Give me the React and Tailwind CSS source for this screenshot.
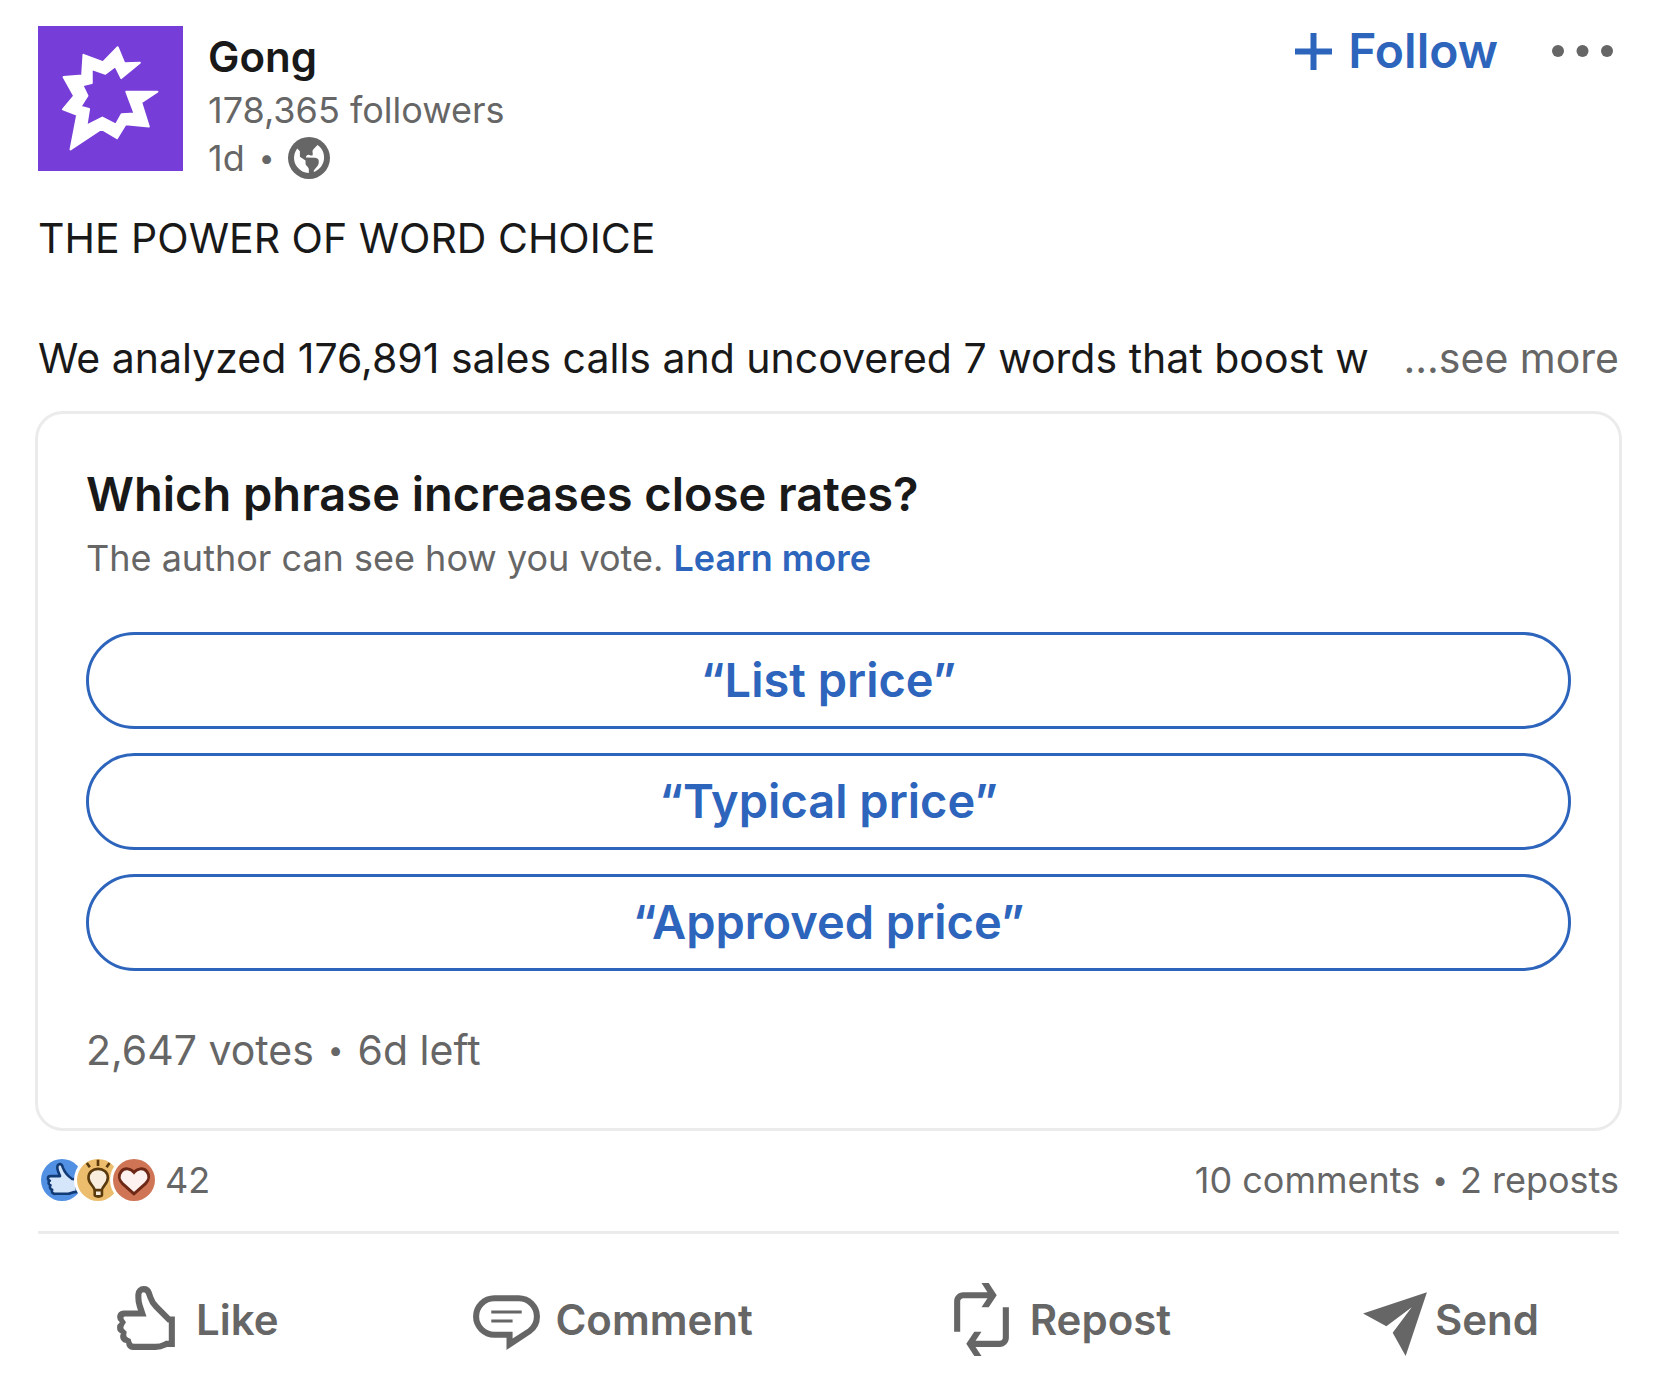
const pollOptions = ['“List price”', '“Typical price”', '“Approved price”']

function GongLogo() {
  return (
    <svg className="w-[145px] h-[145px] shrink-0 bg-[#773dd8]" viewBox="54 48 437 437" role="img" aria-label="Gong logo">
      <path
        d="M294 112L314 160L361 159L305 205L287 169L257 192L216 178L216 220L188 227L203 258L182 291L208 298L200 348L248 324L289 345L306 314L345 312L320 246L414 246L365 278L388 351L318 344L292 386L245 358L152 420L172 316L129 299L163 259L131 202L187 197L191 135L250 157Z"
        fill="#fff"
        stroke="#fff"
        strokeWidth="6"
        strokeLinejoin="round"
      />
    </svg>
  )
}

function GlobeIcon() {
  return (
    <svg className="w-[42px] h-[42px]" viewBox="804 385 127 127" aria-hidden="true">
      <circle cx="867.5" cy="448.5" r="63.5" fill="#666" />
      <path
        d="M832 420C819 437 819 460 832 476C841 488 853 494 867 494L867 482C867 475 857 472 857 464L857 456L840 445L840 428Z"
        fill="#fff"
      />
      <path
        d="M893 409C908 419 914 434 913 449C912 467 902 481 885 490L881 489C885 480 896 474 897 462C898 453 894 449 886 448L858 447C859 440 866 436 872 441L878 441C881 434 876 430 879 424Z"
        fill="#fff"
      />
    </svg>
  )
}

function LikeReaction() {
  return (
    <svg viewBox="63 55 128 128" className="w-full h-full" aria-hidden="true">
      <path
        d="M172 117L158 116C145 107 136 98 130 82C127 72 123 69 118 71C111 73 112 83 115 92L121 107L92 107C82 107 82 119 90 121C84 124 85 133 92 135C88 140 91 147 97 149C94 157 99 162 107 161L145 161C153 161 158 155 172 155Z"
        fill="#d5e6fb"
        stroke="#123a75"
        strokeWidth="8"
        strokeLinejoin="round"
      />
    </svg>
  )
}

function InsightReaction() {
  return (
    <svg viewBox="171 55 128 128" className="w-full h-full" aria-hidden="true">
      <g stroke="#5a3a0c" strokeWidth="8" fill="none">
        <path d="M235 57V76M201 67L210 80M270 67L261 80" />
        <path
          d="M225 165V149C222 137 206 130 206 112C206 96 219 85 235 85C252 85 265 96 265 112C265 130 249 137 247 149V165C247 171 225 171 225 165Z"
          fill="#f9eedd"
          strokeLinejoin="round"
        />
        <path d="M222 150H250" />
      </g>
    </svg>
  )
}

function LoveReaction() {
  return (
    <svg viewBox="281 55 128 128" className="w-full h-full" aria-hidden="true">
      <path
        d="M345 161L310 130C298 118 298 103 306 93C316 81 335 83 345 96C355 83 374 81 384 93C392 103 392 118 380 130Z"
        fill="#fdf2ef"
        stroke="#6d2816"
        strokeWidth="9"
      />
    </svg>
  )
}

function ActionIcon({ d, viewBox = '0 0 24 24', className = 'w-[73px]' }) {
  return (
    <svg className={`h-[73px] ${className}`} viewBox={viewBox} fill="currentColor" aria-hidden="true">
      <path fillRule="evenodd" d={d} />
    </svg>
  )
}

const thumb =
  'M19.46 11l-3.91-3.91a7 7 0 01-1.69-2.74l-.49-1.47A2.76 2.76 0 0010.76 1 2.75 2.75 0 008 3.74v1.12a9.19 9.19 0 00.46 2.85L8.89 9H4.12A2.12 2.12 0 002 11.12a2.16 2.16 0 00.92 1.76A2.11 2.11 0 002 14.62a2.14 2.14 0 001.28 2 2 2 0 00-.28 1 2.12 2.12 0 002 2.12v.14A2.12 2.12 0 007.12 22h7.49a8.08 8.08 0 003.58-.84l.31-.16H21V11zM19 19h-1l-.73.37a6.14 6.14 0 01-2.69.63H7.72a1 1 0 01-1-.72l-.25-.87-.85-.41A1 1 0 015 17l.17-1-.76-.74A1 1 0 014.27 14l.66-1.09-.73-1.1a.49.49 0 01.08-.7.48.48 0 01.34-.11h7.05l-1.31-3.92A7 7 0 0110 4.86V3.75a.77.77 0 01.75-.75.75.75 0 01.71.51L12 5a9 9 0 002.13 3.5l4.5 4.5H19z'
const bubble =
  'M7 9h10v1H7zm0 4h7v-1H7zm16-2a6.78 6.78 0 01-2.84 5.61L12 22v-4H8A7 7 0 018 4h8a7 7 0 017 7zm-2 0a5 5 0 00-5-5H8a5 5 0 000 10h6v2.28L19 15a4.79 4.79 0 002-4z'
const arrows =
  'M13.96 5H6c-.55 0-1 .45-1 1v10H3V6c0-1.66 1.34-3 3-3h7.96L12 0h2.37L17 4l-2.63 4H12zM19 8v10c0 .55-.45 1-1 1h-7.96L12 16H9.63L7 20l2.63 4H12l-1.96-3H18c1.66 0 3-1.34 3-3V8z'
const plane = 'M21 3L0 10l7.66 4.26L16 8l-6.26 8.34L14 24z'

function Dot() {
  return <span className="text-[28px]">•</span>
}

export default function App() {
  return (
    <main className="min-h-screen bg-white pl-[38px] pr-[41px] pt-[26px] font-['Inter',sans-serif] text-[#191919]">
      <header className="flex items-start">
        <GongLogo />
        <div className="ml-[25px] pt-[2px] text-[36px] leading-[48px] text-[#666]">
          <h1 className="text-[42px] leading-[58px] font-semibold text-[#191919]">Gong</h1>
          <p>178,365 followers</p>
          <p className="flex items-center">
            1d
            <span className="flex mx-[14px]"><Dot /></span>
            <GlobeIcon />
          </p>
        </div>
        <button className="ml-auto flex items-center gap-4 text-[48px] leading-[50px] font-semibold text-[#2d64bc]">
          <svg className="w-[37px] h-[37px]" viewBox="0 0 37 37" stroke="currentColor" strokeWidth="6" aria-hidden="true">
            <path d="M18.5 0V37M0 18.5H37" />
          </svg>
          Follow
        </button>
        <button className="ml-[54px] mr-[6px] h-[50px] flex items-center" aria-label="More options">
          <svg className="w-[61px] h-3" viewBox="0 0 61 12" fill="#666" aria-hidden="true">
            <circle cx="6" cy="6" r="6" />
            <circle cx="30.5" cy="6" r="6" />
            <circle cx="55" cy="6" r="6" />
          </svg>
        </button>
      </header>

      <section className="mt-[26px] text-[41px] leading-[60px]">
        <p>THE POWER OF WORD CHOICE</p>
        <div className="mt-[60px] flex justify-between whitespace-nowrap">
          <p className="overflow-hidden">We analyzed 176,891 sales calls and uncovered 7 words that boost w</p>
          <button className="text-[#666]">...see more</button>
        </div>
      </section>

      {/* Poll */}
      <section className="-mx-[3px] mt-[23px] px-[48px] pt-[50px] pb-[48px] border-3 border-[#ebebeb] rounded-[28px]">
        <h2 className="text-[47px] leading-[60px] font-semibold">Which phrase increases close rates?</h2>
        <p className="mt-[10px] text-[36px] leading-[48px] text-[#666]">
          The author can see how you vote.{' '}
          <a href="#" className="font-semibold text-[#2d64bc]">Learn more</a>
        </p>
        <div className="mt-[50px] flex flex-col gap-6">
          {pollOptions.map((option) => (
            <button
              key={option}
              className="h-[97px] rounded-full border-3 border-[#2d64bc] text-[47px] font-semibold text-[#2d64bc]"
            >
              {option}
            </button>
          ))}
        </div>
        <p className="mt-[49px] flex items-center gap-[14px] text-[41px] leading-[60px] text-[#666]">
          2,647 votes <Dot /> 6d left
        </p>
      </section>

      {/* Reactions */}
      <div className="mt-[25px] pl-[3px] flex items-center justify-between text-[36px] leading-[48px] text-[#666]">
        <button className="flex items-center" aria-label="42 reactions">
          <span className="w-[42px] h-[42px] rounded-full overflow-hidden bg-[#5190e3]"><LikeReaction /></span>
          <span className="w-[42px] h-[42px] -ml-[6px] rounded-full overflow-hidden bg-[#ebbd6c] ring-3 ring-white"><InsightReaction /></span>
          <span className="w-[42px] h-[42px] -ml-[6px] rounded-full overflow-hidden bg-[#cf7556] ring-3 ring-white"><LoveReaction /></span>
          <span className="ml-[10px]">42</span>
        </button>
        <div className="flex items-center gap-3">
          <button>10 comments</button>
          <Dot />
          <button>2 reposts</button>
        </div>
      </div>

      <div className="mt-[27px] pl-[73px] pr-20 pt-[49px] pb-9 flex justify-between border-t-3 border-[#ebebeb] text-[42px] font-semibold text-[#666]">
        <button className="flex items-center gap-3">
          <ActionIcon d={thumb} />
          Like
        </button>
        <button className="flex items-center gap-3">
          <ActionIcon d={bubble} />
          Comment
        </button>
        <button className="flex items-center gap-3">
          <ActionIcon d={arrows} />
          Repost
        </button>
        <button className="flex items-center gap-2">
          <ActionIcon d={plane} viewBox="0 0 21 24" className="w-[64px]" />
          Send
        </button>
      </div>
    </main>
  )
}
